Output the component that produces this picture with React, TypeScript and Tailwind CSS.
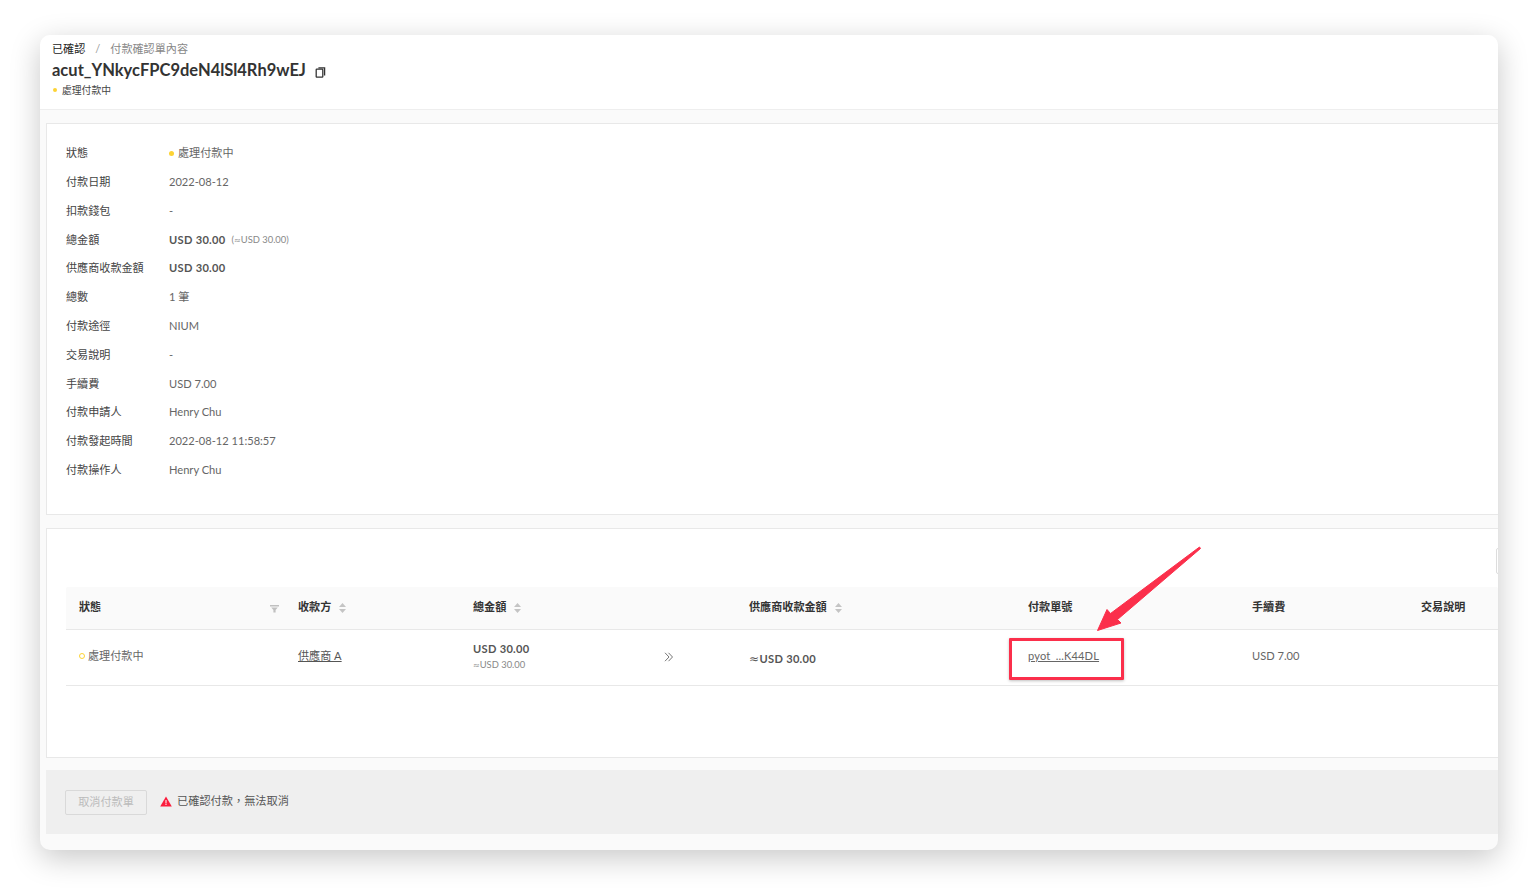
const summary = [
  { label: "付款日期", value: "2022-08-12" },
  { label: "扣款錢包", value: "-" },
];
const summaryRest = [
  { label: "總數", value: "1 筆" },
  { label: "付款途徑", value: "NIUM" },
  { label: "交易說明", value: "-" },
  { label: "手續費", value: "USD 7.00" },
  { label: "付款申請人", value: "Henry Chu" },
  { label: "付款發起時間", value: "2022-08-12 11:58:57" },
  { label: "付款操作人", value: "Henry Chu" },
];

function Row({ label, children }: { label: string; children: React.ReactNode }) {
  return (
    <div className="flex items-center h-[28.8px]">
      <div className="w-[103px] shrink-0 text-[#444]">{label}</div>
      <div className="flex items-center text-[#666]">{children}</div>
    </div>
  );
}

function SortIcon() {
  return (
    <svg width="7" height="10" viewBox="0 0 7 10" className="ml-2 mt-[3px] shrink-0" fill="#c4c4c4">
      <path d="M3.5 0 7 4H0z" />
      <path d="M0 6h7l-3.5 4z" />
    </svg>
  );
}

function CopyIcon() {
  return (
    <svg width="11" height="11" viewBox="0 0 11 11" className="ml-[9px] mt-1" fill="none" stroke="#333" strokeWidth="1.3">
      <rect x="1.2" y="2.2" width="6.6" height="8" rx="0.6" />
      <path d="M3.4 0.8h6.2v7.8" />
    </svg>
  );
}

function Annotation() {
  return (
    <>
      {/* 빨간 강조 박스 */}
      <div className="absolute left-[969px] top-[603px] w-[115px] h-[42px] border-[3px] border-[#fb2f4b] rounded-[1px] shadow-[0_1px_3px_rgba(0,0,0,0.25)]" />
      <svg width="120" height="100" viewBox="0 0 120 100" className="absolute left-[1050px] top-[510px]">
        <path
          d="M110.5 3.5 L27.5 74.5 L31 78 L7.5 85.5 L17 64.5 L20.5 68.5 L109.5 2 Z"
          fill="#fb2f4b"
          stroke="#fb2f4b"
          strokeWidth="1"
          strokeLinejoin="round"
        />
      </svg>
    </>
  );
}

export default function App() {
  return (
    <div className="h-[895px] w-full overflow-hidden bg-white pt-[35px] pl-10 font-['Lato','Noto_Sans_CJK_TC',sans-serif] text-[11.1px]">
      <div className="relative w-[1458px] h-[815px] overflow-hidden rounded-[10px] bg-[#fafafa] shadow-[0_8px_30px_rgba(0,0,0,0.22)]">
        {/* 상단 헤더 */}
        <div className="h-[75px] bg-white border-b border-[#eeeeee] px-3 pt-[7px]">
          <div className="flex items-center h-[14px]">
            <span className="text-[#222]">已確認</span>
            <span className="mx-[10px] text-[#999]">/</span>
            <span className="text-[#888]">付款確認單內容</span>
          </div>
          <div className="flex items-center h-[26px] mt-[1px]">
            <h1 className="text-[16.5px] font-bold leading-none text-[#333]">acut_YNkycFPC9deN4lSl4Rh9wEJ</h1>
            <CopyIcon />
          </div>
          <div className="flex items-center h-[14px] text-[9.8px] text-[#444] pl-[1px]">
            <span className="size-1 rounded-full bg-[#fdd334] mr-[5px]" />
            處理付款中
          </div>
        </div>

        {/* 상세 카드 */}
        <div className="ml-1.5 mt-[13px] h-[392px] bg-white border border-r-0 border-[#e8e8e8] pl-[19px] pt-[15.2px]">
          <Row label="狀態">
            <span className="size-[5px] rounded-full bg-[#fdd334] mr-1" />
            處理付款中
          </Row>
          {summary.map((item) => (
            <Row key={item.label} label={item.label}>{item.value}</Row>
          ))}
          <Row label="總金額">
            <span className="font-bold text-[#555] tracking-[0.3px]">USD 30.00</span>
            <span className="ml-[6px] text-[9.4px] text-[#888]">
              (<span className="font-['DejaVu_Sans'] text-[8px]">≈</span>USD 30.00)
            </span>
          </Row>
          <Row label="供應商收款金額">
            <span className="font-bold text-[#555] tracking-[0.3px]">USD 30.00</span>
          </Row>
          {summaryRest.map((item) => (
            <Row key={item.label} label={item.label}>{item.value}</Row>
          ))}
        </div>

        {/* 테이블 카드 */}
        <div className="relative ml-1.5 mt-[13px] h-[230px] bg-white border border-r-0 border-[#e8e8e8] pl-[19px] pt-[58px]">
          <div className="absolute right-[-4px] top-[19px] w-1.5 h-[26px] border border-[#ddd] rounded-[2px]" />
          <div className="grid grid-cols-[219px_175px_190px_86px_279px_224px_169px_1fr] h-[43px] items-center bg-[#fafafa] border-b border-[#e8e8e8] rounded-t-[2px] font-bold text-[#333] pb-[2px]">
            <div className="pl-[13px] flex items-center justify-between pr-[6px]">
              <span>狀態</span>
              <svg width="9" height="8" viewBox="0 0 9 8" className="mt-1" fill="#c0c0c0">
                <path d="M0 0h9v1.5H0zM1.2 2.6h6.6L5.6 5v2.6H3.4V5z" />
              </svg>
            </div>
            <div className="pl-[13px] flex items-center">收款方<SortIcon /></div>
            <div className="pl-[13px] flex items-center">總金額<SortIcon /></div>
            <div />
            <div className="pl-[13px] flex items-center">供應商收款金額<SortIcon /></div>
            <div className="pl-[13px]">付款單號</div>
            <div className="pl-[13px]">手續費</div>
            <div className="pl-[13px]">交易說明</div>
          </div>
          <div className="grid grid-cols-[219px_175px_190px_86px_279px_224px_169px_1fr] h-[56px] items-center border-b border-[#e8e8e8] text-[#666] pb-[2px]">
            <div className="pl-[13px] flex items-center">
              <span className="size-[6px] rounded-full border border-[#fdd334] mr-[3px]" />
              處理付款中
            </div>
            <div className="pl-[13px]"><span className="underline text-[#555]">供應商 A</span></div>
            <div className="pl-[13px] leading-[16px] pt-[2px]">
              <div className="font-bold text-[#555] tracking-[0.3px]">USD 30.00</div>
              <div className="text-[9.4px] text-[#888]">
                <span className="font-['DejaVu_Sans'] text-[8px]">≈</span>USD 30.00
              </div>
            </div>
            <div className="pl-[14px] text-[#666]">
              <svg width="10" height="10" viewBox="0 0 10 10" fill="none" stroke="#666" strokeWidth="0.9">
                <path d="M1 0.8 5 5 1 9.2M4.5 0.8 8.5 5 4.5 9.2" />
              </svg>
            </div>
            <div className="pl-[13px] font-bold text-[#555] pt-[5px] tracking-[0.3px] flex items-center">
              <span className="font-['DejaVu_Sans'] text-[12px] leading-none font-normal w-[10.5px]">≈</span>USD 30.00
            </div>
            <div className="pl-[13px]"><span className="underline tracking-[0.15px]">pyot_...K44DL</span></div>
            <div className="pl-[13px]">USD 7.00</div>
            <div />
          </div>
        </div>

        {/* 하단 액션 바 */}
        <div className="ml-1.5 mt-[12px] h-[64px] bg-[#efefef] flex items-center pl-[19px]">
          <button className="w-[82px] h-[25px] border border-[#d9d9d9] rounded-[2px] text-[#bbb] mt-[1px]">取消付款單</button>
          <svg width="12" height="11" viewBox="0 0 12 11" className="ml-[13px] mr-[5px] mb-[1px]">
            <path d="M6 0.5 11.8 10.5H0.2z" fill="#fb1d3d" />
            <path d="M5.5 4h1v3.4h-1zM5.5 8.1h1v1h-1z" fill="#fff" />
          </svg>
          <span className="text-[#555] text-[11.2px] pb-[1px]">已確認付款，無法取消</span>
        </div>

        <Annotation />
      </div>
    </div>
  );
}
